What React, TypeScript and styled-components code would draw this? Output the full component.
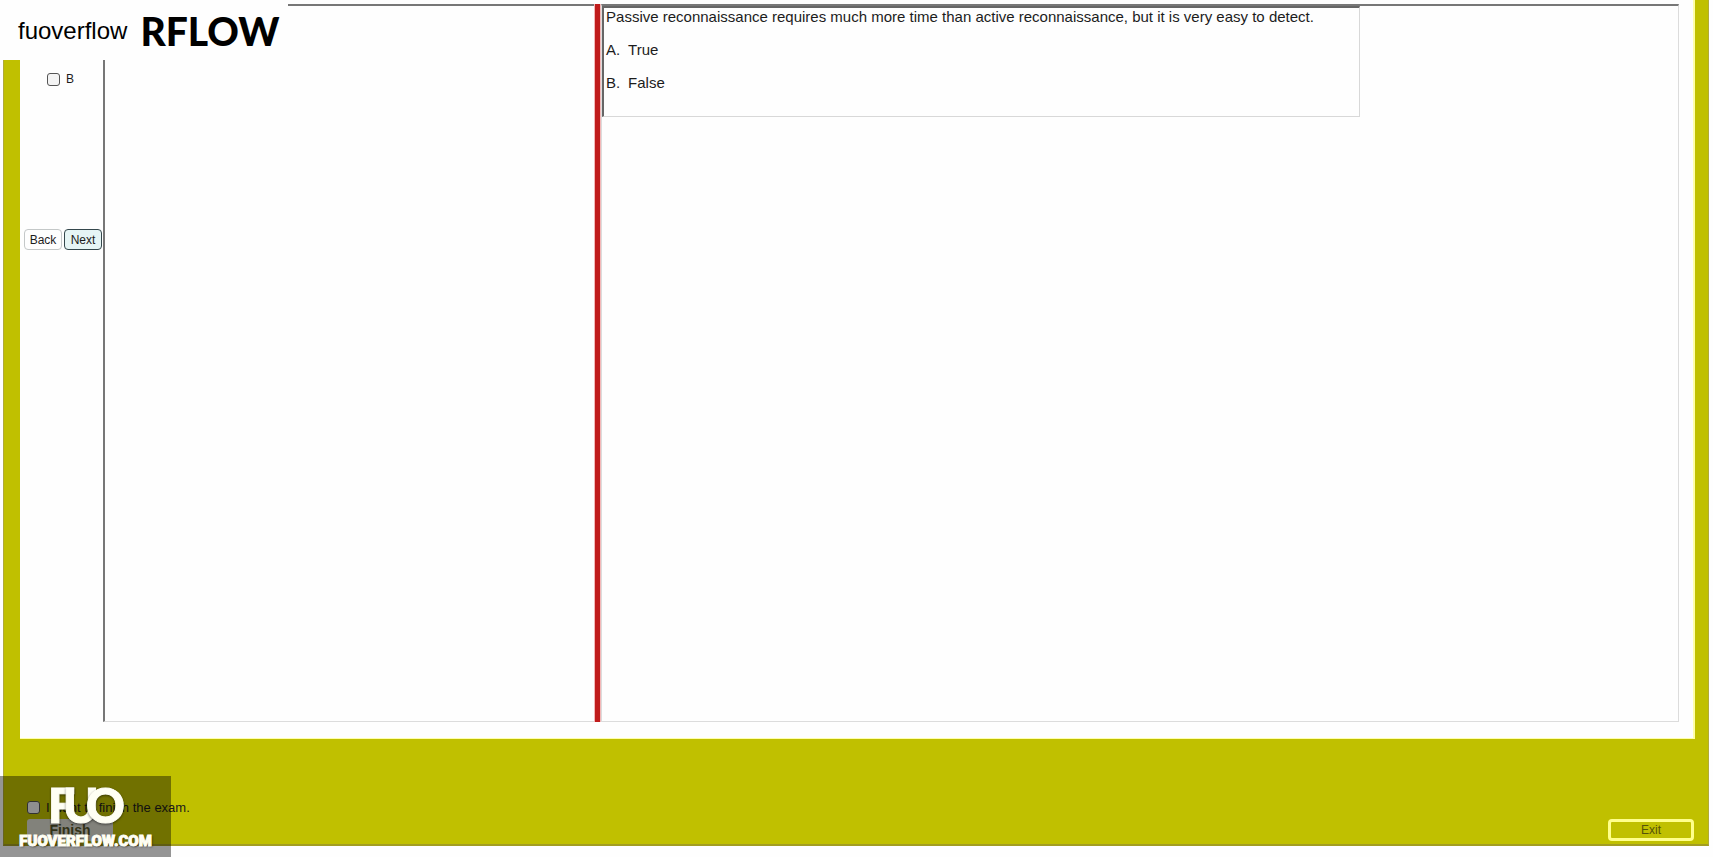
import React from "react";
import styled, { createGlobalStyle } from "styled-components";

const Global = createGlobalStyle`
  *, *::before, *::after { box-sizing: border-box; }
  body {
    margin: 0;
    background: #fefefe;
    color: #1c1c1c;
    font-family: "Liberation Sans", Arial, sans-serif;
  }
`;

const Screen = styled.div`
  position: relative;
  display: flex;
  flex-direction: column;
  min-height: 100vh;
  padding: 0 4px 11px 3px;
  overflow: hidden;
`;

const Frame = styled.main`
  flex: 1;
  display: flex;
  flex-direction: column;
  padding: 0 13px 0 16px;
  background: #c0c000;
  border-right: 1px solid #b0aa38;
  border-left: 1px solid #b0aa38;
  border-bottom: 2px solid #a29d22;
`;

const Panel = styled.section`
  flex: 1;
  display: flex;
  padding: 4px 14px 16px 0;
  background: #fefefe;
  border: solid #ffffa8;
  border-width: 0 2px 1px 0;
`;

const AnswerColumn = styled.form`
  display: flex;
  flex-direction: column;
  width: 83px;
  padding: 66px 1px 0 4px;
`;

const AnswerOption = styled.label`
  display: flex;
  align-items: center;
  gap: 6px;
  height: 18px;
  padding-left: 23px;
  font-size: 12px;
`;

const Check = styled.input`
  appearance: none;
  width: 13px;
  height: 13px;
  margin: 0;
  border: 1px solid #555;
  border-radius: 3px;
  background: #f4f4f4;
  &:checked { background: #555; }
`;

const NavButtons = styled.div`
  display: flex;
  gap: 2px;
  margin-top: 141px;
`;

const NavButton = styled.button<{ $active?: boolean }>`
  flex: 1;
  height: 21px;
  padding: 0;
  border: 1px solid ${(p) => (p.$active ? "#34474c" : "#c4c8c8")};
  border-radius: 4px;
  background: ${(p) => (p.$active ? "#e6f5f5" : "#fefefe")};
  color: #1c1c1c;
  font: 12px "Liberation Sans", Arial, sans-serif;
`;

const Pane = styled.div<{ $grow: number; $left?: boolean }>`
  flex: ${(p) => p.$grow} 1 0;
  min-width: 0;
  border: solid #dcdcdc;
  border-width: 2px ${(p) => (p.$left ? 0 : 1)}px 1px ${(p) => (p.$left ? 2 : 1)}px;
  border-top-color: #777;
  border-left-color: ${(p) => (p.$left ? "#777" : "#dcdcdc")};
`;

const Splitter = styled.div`
  width: 7px;
  border: solid #f3b8b8;
  border-width: 0 1px;
  background: #c01c1c;
`;

const Question = styled.article`
  width: 70.4%;
  height: 111px;
  padding: 0 2px;
  border: solid #d8d8d8;
  border-width: 2px 1px 1px 2px;
  border-top-color: #666;
  border-left-color: #666;
  font-size: 15px;
  line-height: 17px;
`;

const Prompt = styled.p`
  margin: 0 0 16px;
`;

const Choices = styled.ol`
  display: flex;
  flex-direction: column;
  gap: 16px;
  margin: 0;
  padding: 0;
  list-style: none;
`;

const Choice = styled.li`
  display: flex;
`;

const Letter = styled.span`
  width: 22px;
`;

const Footer = styled.footer`
  display: flex;
  justify-content: space-between;
  align-items: flex-end;
  height: 105px;
  padding: 0 1px 3px 0;
`;

const FinishGroup = styled.div`
  display: flex;
  flex-direction: column;
  gap: 3px;
  padding-left: 7px;
`;

const FinishLabel = styled.label`
  display: flex;
  align-items: center;
  gap: 6px;
  height: 18px;
  font-size: 13px;
`;

const FinishButton = styled.button`
  width: 86px;
  height: 22px;
  padding: 0;
  border: 0;
  border-radius: 3px;
  background: #deded2;
  color: #56562a;
  font: bold 14px "Liberation Sans", Arial, sans-serif;
`;

const ExitButton = styled.button`
  width: 86px;
  height: 22px;
  padding: 0;
  border: 3px solid #ffff8c;
  border-radius: 4px;
  background: #c0c000;
  color: #55530a;
  font: 12px "Liberation Sans", Arial, sans-serif;
`;

const Brand = styled.header`
  position: absolute;
  top: 0;
  left: 0;
  display: flex;
  align-items: center;
  gap: 13px;
  width: 288px;
  height: 60px;
  padding: 2px 0 0 18px;
  background: #fefefe;
  color: #000;
`;

const BrandName = styled.span`
  font-size: 24px;
`;

const BrandMark = styled.strong`
  font: 900 39px Lato, sans-serif;
`;

const Watermark = styled.aside`
  position: absolute;
  bottom: 0;
  left: 0;
  display: flex;
  flex-direction: column;
  align-items: center;
  gap: 4px;
  width: 171px;
  height: 81px;
  padding-top: 8px;
  background: rgba(0, 0, 0, 0.41);
  color: #fffff4;
  pointer-events: none;
`;

const Monogram = styled.svg`
  display: block;
  width: 84px;
  height: 44px;
  fill: #fffff4;
  stroke: #fffff4;
  font: 900 48px Lato, sans-serif;
  text { filter: drop-shadow(0 1px 1px rgba(0, 0, 0, 0.5)); }
`;

const Site = styled.span`
  font: 900 15px Roboto, sans-serif;
  -webkit-text-stroke: 1px #fffff4;
  text-shadow: 1px 1px 2px rgba(0, 0, 0, 0.6);
`;

const choices = [
  { letter: "A.", text: "True" },
  { letter: "B.", text: "False" },
];

export default function App() {
  return (
    <Screen>
      <Global />
      <Frame>
        <Panel>
          <AnswerColumn onSubmit={(e: React.FormEvent) => e.preventDefault()}>
            <AnswerOption>
              <Check type="checkbox" />B
            </AnswerOption>
            <NavButtons>
              <NavButton type="button">Back</NavButton>
              <NavButton type="button" $active>Next</NavButton>
            </NavButtons>
          </AnswerColumn>
          <Pane $grow={490} $left />
          <Splitter />
          <Pane $grow={1078}>
            <Question>
              <Prompt>
                Passive reconnaissance requires much more time than active reconnaissance, but it is very easy to detect.
              </Prompt>
              <Choices>
                {choices.map((c) => (
                  <Choice key={c.letter}>
                    <Letter>{c.letter}</Letter>
                    {c.text}
                  </Choice>
                ))}
              </Choices>
            </Question>
          </Pane>
        </Panel>
        <Footer>
          <FinishGroup>
            <FinishLabel>
              <Check type="checkbox" />I want to finish the exam.
            </FinishLabel>
            <FinishButton type="button">Finish</FinishButton>
          </FinishGroup>
          <ExitButton type="button">Exit</ExitButton>
        </Footer>
      </Frame>
      <Brand>
        <BrandName>fuoverflow</BrandName>
        <BrandMark>RFLOW</BrandMark>
      </Brand>
      <Watermark>
        <Monogram viewBox="0 0 84 44" aria-label="FUO">
          <text x="4" y="39">F</text>
          <text x="19" y="39">U</text>
          <text x="42" y="39">O</text>
        </Monogram>
        <Site>FUOVERFLOW.COM</Site>
      </Watermark>
    </Screen>
  );
}
